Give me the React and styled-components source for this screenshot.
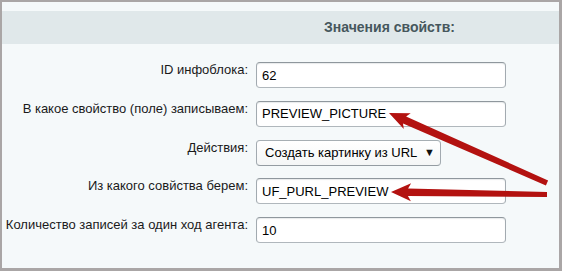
import React from "react";
import styled, { createGlobalStyle } from "styled-components";

const Global = createGlobalStyle`
  html, body { margin: 0; padding: 0; background: #f5f9fa; }
  body { font-family: "Liberation Sans", Arial, sans-serif; }
`;

const Frame = styled.div`
  position: relative;
  box-sizing: border-box;
  width: 562px;
  height: 271px;
  border-style: solid;
  border-color: #aaa6a6;
  border-width: 2px 3px 3px 2px;
  background: #f5f9fa;
  padding-top: 9px;
  overflow: hidden;
`;

const Heading = styled.div`
  height: 33px;
  line-height: 33px;
  background: #e0e8ea;
  padding-left: 322px;
  font-size: 14px;
  font-weight: bold;
  color: #46575d;
`;

const Form = styled.div`
  display: grid;
  grid-template-columns: 246px auto;
  column-gap: 8px;
  row-gap: 12.75px;
  align-items: start;
  padding-top: 18px;
`;

const Label = styled.label`
  text-align: right;
  font-size: 13px;
  line-height: 15px;
  color: #1a1a1a;
  white-space: nowrap;
`;

const Field = styled.input`
  box-sizing: border-box;
  width: ${(p) => p.$w || 250}px;
  height: 26px;
  margin: 0;
  padding: 0 5px;
  border: 1px solid;
  border-color: #8f979d #a2aab0 #b0b7bc #a2aab0;
  border-radius: 4px;
  background: #fff;
  box-shadow: inset 0 1px 1px rgba(160, 170, 175, 0.25);
  font-family: "Liberation Sans", Arial, sans-serif;
  font-size: 13px;
  color: #000;
  outline: none;
`;

const SelectWrap = styled.div`
  position: relative;
  width: 185px;
  height: 26px;
`;

const Select = styled.select`
  appearance: none;
  -webkit-appearance: none;
  box-sizing: border-box;
  width: 100%;
  height: 100%;
  margin: 0;
  padding: 0 20px 0 8px;
  border: 1px solid;
  border-color: #a6aeb3 #a2aab0 #949ca2 #a2aab0;
  border-radius: 4px;
  background: linear-gradient(#ffffff, #f4f6f6);
  font-family: "Liberation Sans", Arial, sans-serif;
  font-size: 13px;
  color: #000;
  outline: none;
`;

const Caret = styled.span`
  position: absolute;
  right: 6px;
  top: 6px;
  font-size: 11px;
  line-height: 12px;
  color: #111;
  pointer-events: none;
`;

const Overlay = styled.svg`
  position: absolute;
  left: -2px;
  top: -2px;
  width: 562px;
  height: 271px;
  pointer-events: none;
`;

function arrowPoints(tip, tail, headLen, headHalf, neckHalf, tailHalf) {
  const dx = tail[0] - tip[0];
  const dy = tail[1] - tip[1];
  const len = Math.hypot(dx, dy);
  const ux = dx / len;
  const uy = dy / len;
  const nx = -uy;
  const ny = ux;
  const bx = tip[0] + ux * headLen;
  const by = tip[1] + uy * headLen;
  const back = 3;
  const p = [
    [tip[0], tip[1]],
    [bx + nx * headHalf + ux * back, by + ny * headHalf + uy * back],
    [bx + nx * neckHalf, by + ny * neckHalf],
    [tail[0] + nx * tailHalf, tail[1] + ny * tailHalf],
    [tail[0] - nx * tailHalf, tail[1] - ny * tailHalf],
    [bx - nx * neckHalf, by - ny * neckHalf],
    [bx - nx * headHalf + ux * back, by - ny * headHalf + uy * back],
  ];
  return p.map((q) => q.map((v) => v.toFixed(1)).join(",")).join(" ");
}

const rows = [
  { label: "ID инфоблока:", value: "62" },
  { label: "В какое свойство (поле) записываем:", value: "PREVIEW_PICTURE" },
  { label: "Действия:", select: "Создать картинку из URL" },
  { label: "Из какого совйства берем:", value: "UF_PURL_PREVIEW" },
  { label: "Количество записей за один ход агента:", value: "10" },
];

export default function App() {
  return (
    <>
      <Global />
      <Frame>
        <Heading>Значения свойств:</Heading>
        <Form>
          {rows.map((r, i) => (
            <React.Fragment key={i}>
              <Label>{r.label}</Label>
              {r.select ? (
                <SelectWrap>
                  <Select defaultValue={r.select}>
                    <option>{r.select}</option>
                  </Select>
                  <Caret>▼</Caret>
                </SelectWrap>
              ) : (
                <Field type="text" defaultValue={r.value} readOnly />
              )}
            </React.Fragment>
          ))}
        </Form>
        <Overlay viewBox="0 0 562 271">
          <polygon
            fill="#b31210"
            points={arrowPoints([389, 113], [547, 183], 17, 8.5, 3.8, 2.6)}
          />
          <polygon
            fill="#b31210"
            points={arrowPoints([391, 192], [547, 194.5], 17, 9, 3.8, 2.6)}
          />
        </Overlay>
      </Frame>
    </>
  );
}
